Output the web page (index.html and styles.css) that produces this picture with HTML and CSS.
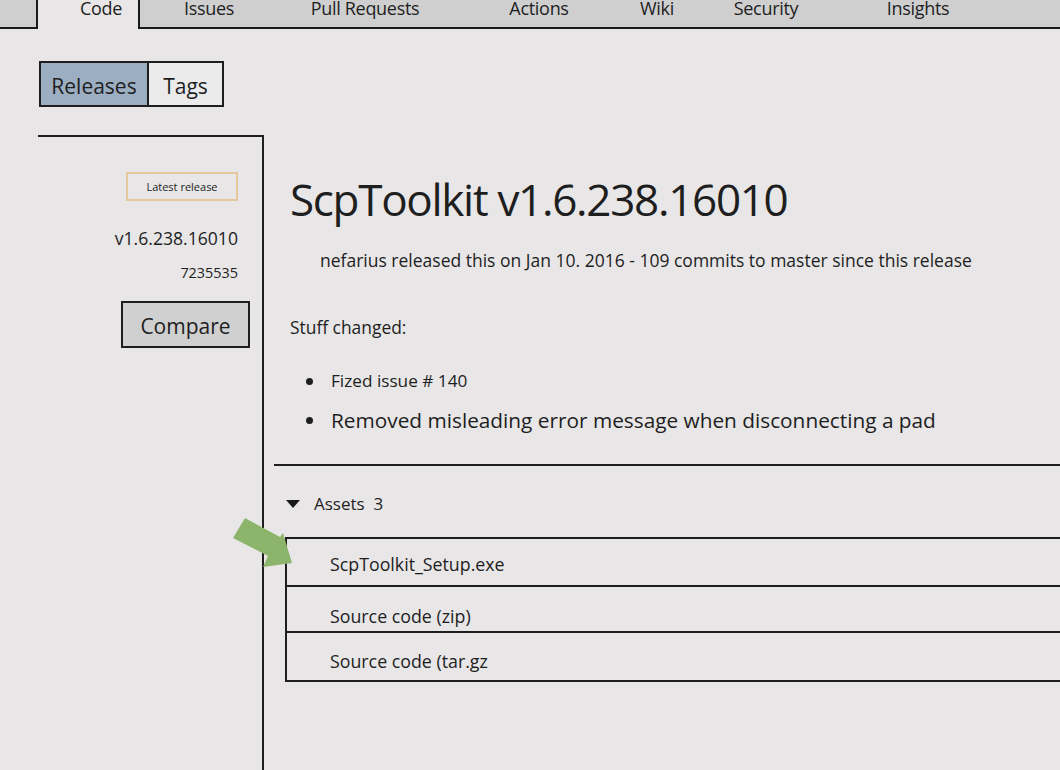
FILE: index.html
```html
<!DOCTYPE html>
<html lang="en">
<head>
<meta charset="utf-8">
<title>ScpToolkit release</title>
<link rel="stylesheet" href="styles.css">
</head>
<body>
<nav class="tabs">
  <div class="tab-stub"></div>
  <div class="tab-active">Code</div>
  <div class="tab-bar">
    <span class="tab">Issues</span>
    <span class="tab">Pull Requests</span>
    <span class="tab">Actions</span>
    <span class="tab">Wiki</span>
    <span class="tab">Security</span>
    <span class="tab">Insights</span>
  </div>
</nav>

<div class="switch">
  <span class="switch-btn is-on">Releases</span>
  <span class="switch-btn is-off">Tags</span>
</div>

<div class="layout">
  <aside class="sidebar">
    <span class="badge">Latest release</span>
    <div class="side-tag">v1.6.238.16010</div>
    <div class="side-commit">7235535</div>
    <span class="compare">Compare</span>
  </aside>

  <main class="main">
    <section class="release">
      <h1 class="title">ScpToolkit v1.6.238.16010</h1>
      <p class="meta">nefarius released this on Jan 10. 2016 - 109 commits to master since this release</p>
      <p class="notes-head">Stuff changed:</p>
      <ul class="notes">
        <li class="note note-small">Fized issue # 140</li>
        <li class="note note-big">Removed misleading error message when disconnecting a pad</li>
      </ul>
    </section>
    <section class="assets">
      <div class="assets-head"><span class="caret"></span><span>Assets&nbsp; 3</span></div>
      <div class="asset-list">
        <div class="asset asset-1">ScpToolkit_Setup.exe</div>
        <div class="asset asset-2">Source code (zip)</div>
        <div class="asset asset-3">Source code (tar.gz</div>
      </div>
    </section>
  </main>

  <svg class="pointer" width="70" height="60" viewBox="0 0 70 60" aria-hidden="true">
    <polygon points="15,8 3,28 38,46 33,57 62,53 53,23 50,27" fill="#8cb56b"/>
  </svg>
</div>
</body>
</html>
```

FILE: styles.css
```css
* { box-sizing: border-box; }

html, body {
  margin: 0;
  height: 770px;
  overflow: hidden;
}

body {
  background: #e8e6e7;
  color: #1e1e1e;
  font-family: "Open Sans", "Noto Sans", sans-serif;
}

/* ---------- top tabs ---------- */
.tabs {
  display: flex;
  height: 33px;
  margin-top: -4px;
}

.tab-stub {
  width: 38px;
  background: #cfcfcf;
  border-right: 2px solid #1a1a1a;
  border-bottom: 2px solid #1a1a1a;
}

.tab-active {
  width: 100px;
  padding-left: 26px;
  text-align: center;
  font-size: 18px;
  line-height: 24px;
  letter-spacing: -0.3px;
}

.tab-bar {
  flex: 1;
  display: grid;
  grid-template-columns: 138px 174px 174px 62px 156px 148px;
  align-content: start;
  background: #cfcfcf;
  border-left: 2px solid #1a1a1a;
  border-bottom: 2px solid #1a1a1a;
}

.tab {
  text-align: center;
  font-size: 18px;
  line-height: 24px;
  letter-spacing: -0.3px;
}

/* ---------- releases / tags switch ---------- */
.switch {
  display: flex;
  margin: 32px 0 0 39px;
}

.switch-btn {
  height: 46px;
  display: flex;
  align-items: center;
  justify-content: center;
  padding-top: 4px;
  font-size: 21px;
  border: 2px solid #1e1e1e;
}

.is-on {
  width: 110px;
  background: #9cafc2;
}

.is-off {
  width: 75px;
  border-left: none;
  background: #ebebeb;
}

/* ---------- layout ---------- */
.layout {
  position: relative;
  display: flex;
  margin-top: 28px;
  height: 636px;
}

.sidebar {
  width: 224px;
  margin-left: 38px;
  border-top: 2px solid #1e1e1e;
  display: flex;
  flex-direction: column;
  align-items: flex-end;
  padding-right: 24px;
}

.badge {
  margin-top: 35px;
  width: 112px;
  height: 29px;
  display: flex;
  align-items: center;
  justify-content: center;
  font-size: 11px;
  border: 2px solid #e6c89d;
}

.side-tag {
  margin-top: 25px;
  font-size: 17.6px;
  line-height: 24px;
}

.side-commit {
  margin-top: 13px;
  font-size: 14.4px;
  line-height: 20px;
}

.compare {
  margin: 18px -12px 0 0;
  width: 129px;
  height: 47px;
  display: flex;
  align-items: center;
  justify-content: center;
  padding-top: 2px;
  font-size: 21px;
  background: #d0d0d0;
  border: 2px solid #1e1e1e;
}

.main {
  flex: 1;
  border-left: 2px solid #1e1e1e;
  padding-left: 10px;
}

.release {
  padding: 36px 0 0 16px;
  border-bottom: 2px solid #1e1e1e;
  height: 331px;
}

.title {
  margin: 0;
  font-weight: 400;
  font-size: 44px;
  line-height: 56px;
  letter-spacing: -1.3px;
}

.meta {
  margin: 21px 0 0 30px;
  font-size: 17.5px;
  line-height: 24px;
}

.notes-head {
  margin: 43px 0 0;
  font-size: 17.4px;
  line-height: 24px;
}

.notes {
  list-style: none;
  margin: 30px 0 0;
  padding-left: 16px;
}

.note {
  display: flex;
  align-items: center;
}

.note::before {
  content: "";
  flex: none;
  width: 7px;
  height: 7px;
  margin-right: 18px;
  border-radius: 50%;
  background: #1e1e1e;
}

.note-small {
  font-size: 17.2px;
  line-height: 24px;
}

.note-big {
  margin-top: 13px;
  font-size: 20.8px;
  line-height: 28px;
}

.assets-head {
  display: flex;
  align-items: center;
  gap: 14px;
  margin: 26px 0 0 12px;
  font-size: 17px;
  line-height: 24px;
}

.caret {
  width: 0;
  height: 0;
  border-left: 7px solid transparent;
  border-right: 7px solid transparent;
  border-top: 8px solid #1a1a1a;
}

.asset-list {
  margin: 21px 0 0 11px;
  border-top: 2px solid #1e1e1e;
  border-left: 2px solid #1e1e1e;
}

.asset {
  padding-left: 43px;
  font-size: 17.8px;
  line-height: 24px;
  border-bottom: 2px solid #1e1e1e;
}

.asset-1 { height: 48px; padding-top: 13px; }
.asset-2 { height: 46px; padding-top: 17px; }
.asset-3 { height: 49px; padding-top: 16px; }

.pointer {
  position: absolute;
  left: 230px;
  top: 375px;
}
```
